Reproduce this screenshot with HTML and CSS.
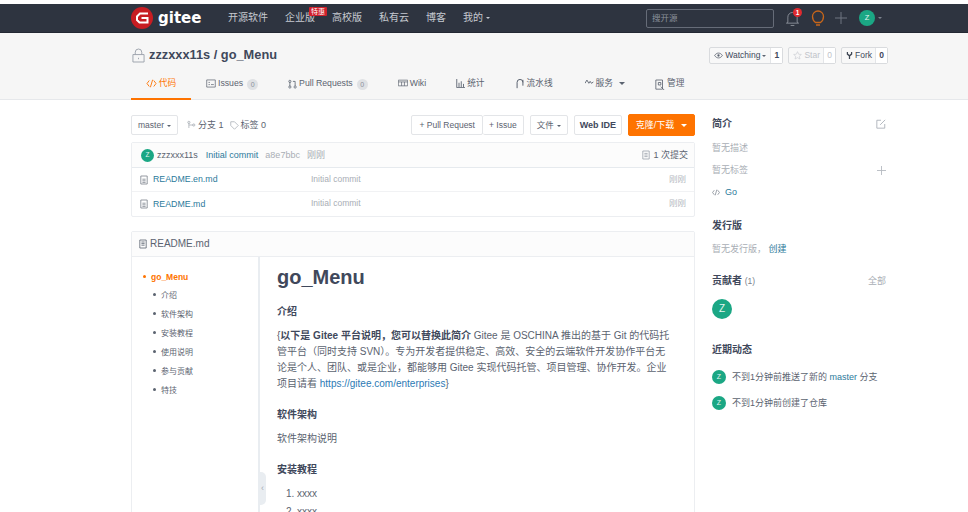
FILE: index.html
```html
<!DOCTYPE html>
<html lang="zh">
<head>
<meta charset="utf-8">
<title>go_Menu</title>
<link rel="stylesheet" href="styles.css">
</head>
<body>
<header class="topbar">
  <div class="wrap topbar-in">
    <a class="logo">
      <svg class="logo-mark" viewBox="0 0 22 22"><circle cx="11" cy="11" r="11" fill="#c71d23"/><path d="M17 6.500H9L6 9.500v3.500l2.500 2.500H16.500V11H10.500" fill="none" stroke="#fff" stroke-width="2"/></svg>
      <span class="logo-text">gitee</span>
    </a>
    <nav class="topnav">
      <a>开源软件</a>
      <a class="has-badge">企业版<span class="badge-red">特惠</span></a>
      <a>高校版</a>
      <a>私有云</a>
      <a>博客</a>
      <a>我的<i class="caret caret-light"></i></a>
    </nav>
    <div class="top-right">
      <div class="search">搜开源</div>
      <span class="bell">
        <svg viewBox="0 0 14 18" width="13" height="17"><path d="M2 13V7.500a5 5 0 0 1 10 0V13l1.500 1H.5zM5 16.500h4" fill="none" stroke="#8b919b" stroke-width="1"/></svg>
        <b class="bell-count">1</b>
      </span>
      <svg class="bulb" viewBox="0 0 14 18" width="14" height="18"><path d="M4.500 13.500C2.500 12 1.500 10.500 1.500 7.500a5.500 5.500 0 0 1 11 0c0 3-1 4.500-3 6zM5 16h4" fill="none" stroke="#c8661a" stroke-width="1.300"/></svg>
      <svg class="plus" viewBox="0 0 12 12" width="12" height="12"><path d="M6 0v12M0 6h12" stroke="#6f7580" stroke-width="1"/></svg>
      <span class="avatar avatar-top">Z</span><i class="caret caret-dim"></i>
    </div>
  </div>
</header>

<section class="repo-head">
  <div class="wrap">
    <div class="repo-title-row">
      <h1 class="repo-title">
        <svg viewBox="0 0 14 16" width="13" height="15"><path d="M3.500 7V4.500a3.500 3.500 0 0 1 7 0V7M1 7h12v8H1zM7 10.500v1.500" fill="none" stroke="#9aa1ab" stroke-width="1"/></svg>
        <span>zzzxxx11s / go_Menu</span>
      </h1>
      <div class="repo-actions">
        <div class="count-btn btn-watch"><span class="count-label"><svg viewBox="0 0 14 10" width="9" height="7"><path d="M1 5c3-5 9-5 12 0-3 5-9 5-12 0z" fill="none" stroke="#5b6370" stroke-width="1.300"/><circle cx="7" cy="5" r="1.800" fill="#5b6370"/></svg>Watching<i class="caret caret-tight"></i></span><b class="count-num">1</b></div>
        <div class="count-btn is-dim"><span class="count-label"><svg viewBox="0 0 14 14" width="9" height="9"><path d="M7 1l1.800 4 4.200.4-3.200 2.800 1 4.300L7 10.300 3.200 12.500l1-4.300L1 5.400 5.200 5z" fill="none" stroke="#c9ccd1" stroke-width="1"/></svg>Star</span><b class="count-num">0</b></div>
        <div class="count-btn"><span class="count-label"><svg viewBox="0 0 10 12" width="7" height="9"><path d="M2 1v3l3 2.500L8 4V1M5 6.500V11" fill="none" stroke="#3f4754" stroke-width="1.800"/></svg>Fork</span><b class="count-num">0</b></div>
      </div>
    </div>
    <nav class="tabs">
      <a class="tab is-active"><svg viewBox="0 0 14 12" width="11" height="9"><path d="M4 2L1 6l3 4M10 2l3 4-3 4M8.500 1l-3 10" fill="none" stroke="#fe7300" stroke-width="1.200"/></svg>代码</a>
      <a class="tab"><svg viewBox="0 0 14 12" width="10" height="9"><path d="M1 1h12v10H1zM3.500 4.500h2M3.500 7.500h2M7 7.500h4" fill="none" stroke="#5b6370" stroke-width="1"/></svg>Issues<span class="pill">0</span></a>
      <a class="tab"><svg viewBox="0 0 12 12" width="9" height="10"><path d="M2.500 3v6M9.500 4.500V8.500M6.500 2.500h3v2" fill="none" stroke="#5b6370" stroke-width="1.100"/><circle cx="2.500" cy="2.500" r="1.500" fill="none" stroke="#5b6370"/><circle cx="2.500" cy="10" r="1.500" fill="none" stroke="#5b6370"/><circle cx="9.500" cy="10" r="1.500" fill="none" stroke="#5b6370"/></svg>Pull Requests<span class="pill">0</span></a>
      <a class="tab"><svg viewBox="0 0 14 10" width="10" height="8"><path d="M.5 1h13v8H.5zM.5 3.500h13M5 3.500V9M9 3.500V9" fill="none" stroke="#5b6370" stroke-width="1"/></svg>Wiki</a>
      <a class="tab"><svg viewBox="0 0 12 12" width="9" height="9"><path d="M1 0v11.500h11M4 5v6M7 3v8M10 6.500V11" fill="none" stroke="#5b6370" stroke-width="1.200"/></svg>统计</a>
      <a class="tab tab-pipeline"><svg viewBox="0 0 12 12" width="10" height="10"><path d="M2.500 4v7M9.500 1v7M2.500 4a2 2 0 0 1 7 0" fill="none" stroke="#5b6370" stroke-width="1.200"/></svg>流水线</a>
      <a class="tab"><svg viewBox="0 0 14 8" width="9" height="6"><path d="M0 6l3-5 3 5 2-3 2 3 3-2" fill="none" stroke="#5b6370" stroke-width="1.400"/></svg>服务<i class="caret caret-big"></i></a>
      <a class="tab"><svg viewBox="0 0 12 14" width="10" height="12"><path d="M1 1h8v11H1zM4 4h3v3H4zM7 9l4 4" fill="none" stroke="#5b6370" stroke-width="1"/></svg>管理</a>
    </nav>
  </div>
</section>

<main class="wrap columns">
  <div class="main-col">
    <div class="toolbar">
      <div class="tool-left">
        <button class="btn">master<i class="caret"></i></button>
        <span class="meta-link"><svg viewBox="0 0 12 12" width="9" height="10"><path d="M2.500 3v7M2.500 6h6" fill="none" stroke="#a5abb3" stroke-width="1"/><circle cx="2.500" cy="2.500" r="1.500" fill="none" stroke="#a5abb3"/><circle cx="9" cy="6" r="1.500" fill="none" stroke="#a5abb3"/></svg>分支 1</span>
        <span class="meta-link"><svg viewBox="0 0 12 12" width="9" height="9"><path d="M1 1h5l5 5-5 5-5-5z" fill="none" stroke="#a5abb3" stroke-width="1"/></svg>标签 0</span>
      </div>
      <div class="tool-right">
        <div class="btn-group"><button class="btn btn-wide">+ Pull Request</button><button class="btn">+ Issue</button></div>
        <button class="btn">文件<i class="caret"></i></button>
        <button class="btn btn-bold">Web IDE</button>
        <button class="btn btn-orange">克隆/下载<i class="caret caret-white"></i></button>
      </div>
    </div>

    <div class="panel files">
      <div class="commit-row">
        <span class="avatar avatar-sm">Z</span>
        <span class="commit-user">zzzxxx11s</span>
        <a class="link commit-msg">Initial commit</a>
        <span class="muted">a8e7bbc</span>
        <span class="muted">刚刚</span>
        <span class="commit-count"><svg viewBox="0 0 10 12" width="8" height="10"><path d="M1 1h8v10H1zM3 4h4M3 6h4M3 8h4" fill="none" stroke="#9aa1ab" stroke-width="1"/></svg>1 次提交</span>
      </div>
      <div class="file-row">
        <svg class="file-ico" viewBox="0 0 10 12" width="8" height="10"><path d="M1 1h8v10H1zM3 5h4M3 7h4M3 9h4" fill="none" stroke="#7b828c" stroke-width="1"/></svg>
        <a class="link file-name">README.en.md</a>
        <span class="file-msg">Initial commit</span>
        <span class="file-time">刚刚</span>
      </div>
      <div class="file-row">
        <svg class="file-ico" viewBox="0 0 10 12" width="8" height="10"><path d="M1 1h8v10H1zM3 5h4M3 7h4M3 9h4" fill="none" stroke="#7b828c" stroke-width="1"/></svg>
        <a class="link file-name">README.md</a>
        <span class="file-msg">Initial commit</span>
        <span class="file-time">刚刚</span>
      </div>
    </div>

    <div class="panel readme">
      <div class="readme-head"><svg viewBox="0 0 10 12" width="8" height="10"><path d="M1 1h8v10H1zM3 3.500h4M3 5.500h4M3 7.500h4" fill="none" stroke="#5b6370" stroke-width="1"/></svg>README.md</div>
      <div class="readme-body">
        <aside class="toc">
          <a class="toc-top"><i class="dot"></i>go_Menu</a>
          <a class="toc-item"><i class="dot"></i>介绍</a>
          <a class="toc-item"><i class="dot"></i>软件架构</a>
          <a class="toc-item"><i class="dot"></i>安装教程</a>
          <a class="toc-item"><i class="dot"></i>使用说明</a>
          <a class="toc-item"><i class="dot"></i>参与贡献</a>
          <a class="toc-item"><i class="dot"></i>特技</a>
          <span class="toc-handle">‹</span>
        </aside>
        <article class="md">
          <h1>go_Menu</h1>
          <h3>介绍</h3>
          <p>{<strong>以下是 Gitee 平台说明，您可以替换此简介</strong> Gitee 是 OSCHINA 推出的基于 Git 的代码托管平台（同时支持 SVN）。专为开发者提供稳定、高效、安全的云端软件开发协作平台无论是个人、团队、或是企业，都能够用 Gitee 实现代码托管、项目管理、协作开发。企业项目请看 <a>https://gitee.com/enterprises</a>}</p>
          <h3>软件架构</h3>
          <p>软件架构说明</p>
          <h3>安装教程</h3>
          <ol><li>xxxx</li><li>xxxx</li></ol>
        </article>
      </div>
    </div>
  </div>

  <aside class="side">
    <section class="side-block block-intro">
      <div class="side-head"><h4>简介</h4><svg viewBox="0 0 12 12" width="10" height="10"><path d="M6 1.500H1v9.500h9.500V6M5 7l6-6" fill="none" stroke="#a5abb3" stroke-width="1"/></svg></div>
      <div class="side-line">暂无描述</div>
      <div class="side-line side-between">暂无标签<svg viewBox="0 0 10 10" width="9" height="9"><path d="M5 0v10M0 5h10" stroke="#b5bac1" stroke-width="1"/></svg></div>
      <div class="side-line lang"><svg viewBox="0 0 14 12" width="8" height="7"><path d="M4 2L1 6l3 4M10 2l3 4-3 4M8.500 1l-3 10" fill="none" stroke="#7b828c" stroke-width="1.300"/></svg><a class="link">Go</a></div>
    </section>
    <section class="side-block block-release">
      <h4>发行版</h4>
      <div class="side-line">暂无发行版， <a class="link">创建</a></div>
    </section>
    <section class="side-block block-contrib">
      <div class="side-head"><h4>贡献者 <small>(1)</small></h4><span class="side-all">全部</span></div>
      <span class="avatar avatar-lg">Z</span>
    </section>
    <section class="side-block block-events">
      <h4>近期动态</h4>
      <div class="event"><span class="avatar avatar-md">Z</span><span>不到1分钟前推送了新的 <a class="link">master</a> 分支</span></div>
      <div class="event"><span class="avatar avatar-md">Z</span><span>不到1分钟前创建了仓库</span></div>
    </section>
  </aside>
</main>
</body>
</html>
```
FILE: styles.css
```css
* { box-sizing: border-box; }
html, body { height: 512px; overflow: hidden; }
body {
  margin: 0;
  padding-top: 4px;
  background: #fff;
  color: #40485b;
  font: 9px/1.4 "Liberation Sans", "Noto Sans CJK SC", sans-serif;
}
a { color: inherit; text-decoration: none; }
i { font-style: normal; }
button { font: inherit; }
h1, h3, h4, p, ol { margin: 0; }
.wrap { width: 755px; margin-left: 131px; }

.caret { display: inline-block; width: 0; height: 0; margin-left: 3px; vertical-align: middle;
  border-left: 2.500px solid transparent; border-right: 2.500px solid transparent; border-top: 2.500px solid #5b6370; }
.caret-light { border-top-color: #c6cad1; }
.caret-dim { border-top-color: #7d838e; }
.caret-white { border-top-color: #fff; margin-left: 7px; border-left-width: 3px; border-right-width: 3px; border-top-width: 3px; }
.caret-big { margin: 5px 0 0 4px; border-left-width: 3px; border-right-width: 3px; border-top-width: 3px; }
.caret-tight { margin-left: 0; }

.topbar { height: 29px; background: #2e3440; border-bottom: 1px solid #232833; color: #c6cad1; }
.topbar-in { display: flex; align-items: center; height: 28px; width: 751px; }
.logo { display: flex; align-items: center; width: 97px; flex: none; }
.logo-mark { width: 22px; height: 22px; }
.logo-text { margin-left: 5px; color: #fff; font: 700 15px/1 "DejaVu Sans", sans-serif; }
.topnav { display: flex; gap: 17px; font-size: 10px; }
.has-badge { position: relative; }
.badge-red { position: absolute; left: 24px; top: -4px; padding: 0 2px; background: #d0202c; color: #fff; font-size: 7px; line-height: 9px; border-radius: 1px; white-space: nowrap; }
.top-right { display: flex; align-items: center; margin-left: auto; }
.search { width: 128px; height: 19px; padding: 0 5px; border: 1px solid #666c78; border-radius: 2px; color: #8b919b; line-height: 17px; font-size: 8.500px; }
.bell { position: relative; display: flex; width: 15px; margin-left: 12px; }
.bell-count { position: absolute; left: 7px; top: -2px; width: 9px; height: 9px; border-radius: 50%; background: #e02a2f; color: #fff; font-size: 6.500px; line-height: 9px; text-align: center; }
.bulb { margin-left: 10px; }
.plus { margin-left: 10px; }
.avatar { display: inline-flex; align-items: center; justify-content: center; flex: none; border-radius: 50%; background: #1ba784; color: #e4f5f0; }
.avatar-top { width: 16px; height: 16px; margin-left: 12px; font-size: 7.500px; }
.avatar-sm { width: 13px; height: 13px; font-size: 6.500px; }
.avatar-md { width: 14px; height: 14px; font-size: 7px; }
.avatar-lg { width: 20px; height: 20px; font-size: 10px; }

.repo-head { height: 67px; background: #f6f6f6; border-bottom: 1px solid #e6e8eb; }
.repo-title-row { display: flex; justify-content: space-between; align-items: flex-start; padding-top: 14px; height: 41px; }
.repo-title { display: flex; align-items: center; gap: 4px; font-size: 12.800px; line-height: 16px; color: #40485b; font-weight: 700; margin-left: 1px; }
.repo-actions { display: flex; gap: 5px; margin-right: -2px; }
.count-btn { display: flex; height: 17px; border: 1px solid #d9dbde; border-radius: 2px; background: #f8f8f8; color: #40485b; font-size: 8.500px; line-height: 15px; }
.count-label { display: flex; align-items: center; gap: 2px; padding: 0 3px 0 4px; }
.btn-watch .count-label { padding-right: 4px; }
.count-num { width: 12px; text-align: center; border-left: 1px solid #e3e5e8; background: #fff; }
.is-dim { color: #bfc3c9; }
.is-dim .count-num { color: #bfc3c9; font-weight: 400; }

.tabs { display: flex; height: 26px; }
.tab { display: flex; align-items: flex-start; gap: 2px; padding: 3px 0 0; margin-right: 30px; font-size: 8.700px; line-height: 13px; color: #5b6370; }
.tab svg { margin-top: 2px; }
.tab.is-active { width: 60px; margin-right: 15px; justify-content: center; color: #fe7300; border-bottom: 2px solid #fe7300; height: 26px; }
.tab.tab-pipeline { margin-right: 32px; }
.pill { margin-left: 2px; margin-top: 2px; width: 11px; height: 11px; border-radius: 50%; background: #dfe1e4; font-size: 7px; line-height: 11px; text-align: center; color: #8b919b; }

.columns { display: flex; gap: 17px; padding-top: 14px; }
.main-col { width: 564px; flex: none; }
.toolbar { display: flex; justify-content: space-between; align-items: center; height: 22px; margin-bottom: 6px; }
.tool-left { display: flex; align-items: center; }
.tool-right { display: flex; align-items: center; gap: 6px; }
.btn { height: 20px; padding: 0 6px; border: 1px solid #e3e5e8; border-radius: 2px; background: #fff; color: #5b6370; font-size: 8.500px; line-height: 18px; }
.btn-wide { padding: 0 7px; }
.btn-group { display: flex; }
.btn-group .btn + .btn { border-left: 0; }
.btn-bold { font-weight: 700; color: #40485b; font-size: 9px; padding: 0 5px; }
.btn-orange { width: 67px; height: 22px; padding: 0; background: #fe7300; border-color: #fe7300; color: #fff; font-size: 9px; }
.meta-link { display: inline-flex; align-items: center; gap: 2px; font-size: 9px; color: #5b6370; }
.tool-left .btn { margin-right: 9px; }
.meta-link + .meta-link { margin-left: 6px; }

.panel { border: 1px solid #eceef1; border-radius: 2px; background: #fff; }
.files { margin-bottom: 14px; }
.commit-row { display: flex; align-items: center; height: 25px; padding: 0 6px 0 9px; gap: 7px; background: #fcfcfc; border-bottom: 1px solid #e6eaee; font-size: 9px; }
.commit-user { margin-left: -4px; color: #5b6370; }
.commit-msg { margin-left: 1px; }
.link { color: #2c7a9b; }
.muted { color: #a9aeb5; }
.commit-count { display: flex; align-items: center; gap: 3px; margin-left: auto; color: #5b6370; }
.file-row { display: flex; align-items: center; height: 24px; padding: 0 8px; border-bottom: 1px solid #f1f2f4; font-size: 8.500px; }
.file-row:last-child { border-bottom: 0; }
.file-ico { flex: none; margin-right: 5px; }
.file-name { width: 158px; font-size: 8.800px; }
.file-msg { color: #a9aeb5; }
.file-time { margin-left: auto; color: #b5bac1; }

.readme-head { display: flex; align-items: center; gap: 3px; height: 25px; padding-left: 7px; background: #fcfcfc; border-bottom: 1px solid #eceef1; font-size: 10px; color: #5b6370; }
.readme-body { display: flex; height: 400px; }
.toc { position: relative; width: 128px; flex: none; padding: 13px 0 0 11px; border-right: 2px solid #e9edf1; font-size: 8px; }
.toc a { display: block; height: 19px; line-height: 14px; color: #5b6370; }
.toc-top.toc-top { color: #fe7300; font-weight: 700; font-size: 8.500px; }
.toc-item { padding-left: 10px; }
.dot { display: inline-block; width: 3px; height: 3px; margin-right: 5px; border-radius: 50%; background: #5b6370; vertical-align: 2px; }
.toc-top .dot { background: #fe7300; }
.toc-handle { position: absolute; right: -8px; top: 215px; width: 7px; height: 33px; background: #e9edf1; border-radius: 0 5px 5px 0; color: #a5abb3; line-height: 33px; text-align: center; font-size: 9px; }

.md { flex: 1; padding: 8px 20px 0 17px; font-size: 10px; line-height: 16px; color: #5b6370; }
.md h1 { font-size: 20px; line-height: 24px; color: #40485b; margin-bottom: 16px; }
.md h3 { font-size: 10px; line-height: 14px; color: #40485b; margin-bottom: 9px; }
.md p { margin-bottom: 16px; }
.md p a { color: #2c7ab5; }
.md strong { color: #40485b; }
.md ol { padding-left: 20px; }
.md li { margin-bottom: 2px; line-height: 16px; }

.side { width: 174px; flex: none; font-size: 9px; color: #a9aeb5; }
.side h4 { font-size: 10px; line-height: 14px; color: #40485b; font-weight: 700; }
.side-head { display: flex; justify-content: space-between; align-items: center; }
.side-head small { font-size: 8.500px; font-weight: 400; color: #7b828c; }
.side-block { display: block; }
.block-intro { padding-top: 3px; }
.side-line { height: 22px; line-height: 22px; }
.block-intro .side-head { margin-bottom: 6px; }
.side-between { display: flex; justify-content: space-between; align-items: center; }
.lang { display: flex; align-items: center; gap: 5px; font-size: 9px; }
.block-release { margin-top: 16px; }
.block-release .side-line { margin-top: 5px; }
.block-contrib { margin-top: 14px; }
.side-all { color: #a9aeb5; }
.avatar-lg { margin-top: 11px; }
.block-events { margin-top: 24px; }
.block-events h4 { margin-bottom: 7px; }
.event { display: flex; align-items: center; gap: 6px; height: 26px; color: #5b6370; }
```
